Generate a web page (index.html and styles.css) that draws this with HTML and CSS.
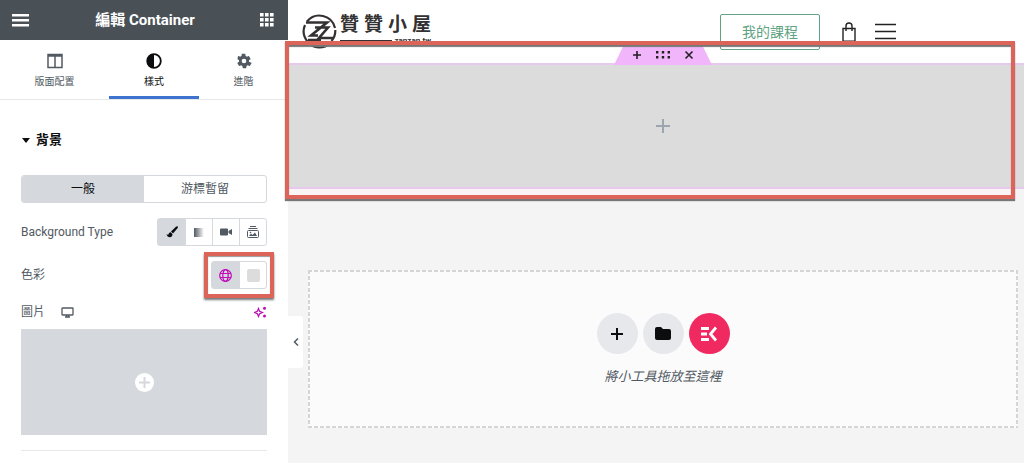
FILE: index.html
```html
<!DOCTYPE html>
<html lang="zh-Hant">
<head>
  <meta charset="UTF-8" />
  <meta name="viewport" content="width=device-width, initial-scale=1.0" />
  <title>編輯 Container</title>
  <link rel="stylesheet" href="styles.css">
</head>
<body>
  <aside class="panel">
    <header class="panel-header">
      <button type="button" class="icon-button" aria-label="Menu">
        <svg width="18" height="14" viewBox="0 0 18 14" fill="#fff"><path d="M0 1h17v2.400H0zM0 6h17v2.400H0zM0 11h17v2.400H0z"/></svg>
      </button>
      <h1>編輯 Container</h1>
      <button type="button" class="icon-button" aria-label="Widgets">
        <svg width="14" height="14" viewBox="0 0 14 14" fill="#fff"><path d="M0 0h3.600v3.600H0zM5 0h3.600v3.600H5zM10 0h3.600v3.600H10zM0 5h3.600v3.600H0zM5 5h3.600v3.600H5zM10 5h3.600v3.600H10zM0 10h3.600v3.600H0zM5 10h3.600v3.600H5zM10 10h3.600v3.600H10z"/></svg>
      </button>
    </header>

    <nav class="tabs">
      <button type="button" class="tab">
        <svg width="16" height="16" viewBox="0 0 16 16" fill="none" stroke="#515962" stroke-width="1.5"><path d="M1 1.5h14v13H1zM8 3v12"/><path d="M1 2.500h14" stroke-width="2.5"/></svg>
        版面配置
      </button>
      <button type="button" class="tab active">
        <svg width="16" height="16" viewBox="0 0 16 16"><circle cx="8" cy="8" r="6.8" fill="none" stroke="#0c0d0e" stroke-width="1.8"/><path d="M8 1a7 7 0 0 0 0 14z" fill="#0c0d0e"/></svg>
        樣式
      </button>
      <button type="button" class="tab">
        <svg width="16" height="16" viewBox="0 0 24 24" fill="#515962"><path d="M19.4 13c.1-.3.1-.7.1-1s0-.7-.1-1l2.300-1.800c.2-.2.3-.5.1-.7l-2.200-3.800c-.1-.2-.4-.3-.7-.2l-2.700 1.100c-.6-.4-1.200-.8-1.800-1l-.4-2.900c0-.3-.3-.5-.5-.5h-4.400c-.3 0-.5.2-.5.5l-.4 2.900c-.7.300-1.300.6-1.800 1l-2.700-1.100c-.3-.1-.5 0-.7.2L2.300 8.500c-.1.200-.1.500.1.700L4.600 11c0 .3-.1.700-.1 1s0 .7.100 1l-2.300 1.800c-.2.200-.2.500-.1.700l2.200 3.800c.1.200.4.300.7.200l2.700-1.100c.6.400 1.200.8 1.800 1l.4 2.900c0 .3.300.5.500.5h4.400c.3 0 .5-.2.500-.5l.4-2.900c.7-.3 1.300-.6 1.800-1l2.700 1.100c.3.100.5 0 .7-.2l2.200-3.800c.1-.2.1-.5-.1-.7zM12 15.500a3.500 3.500 0 1 1 0-7 3.500 3.500 0 0 1 0 7z"/></svg>
        進階
      </button>
    </nav>

    <section class="controls">
      <h2><span class="caret"></span>背景</h2>

      <div class="state-switch">
        <button type="button" class="active">一般</button>
        <button type="button">游標暫留</button>
      </div>

      <fieldset class="row">
        <legend class="hidden">Background Type</legend>
        <span class="label">Background Type</span>
        <div class="choices">
          <label class="choice">
            <input type="radio" name="bg-type" class="hidden" aria-label="Classic" checked>
            <svg width="12" height="12" viewBox="0 0 12 12" fill="#0c0d0e"><path d="M11.700.6c-.5-.5-1.300-.3-1.800.2L5 5.600l2 2 4.500-5.400c.4-.5.6-1.200.2-1.600zM4.600 6.300C3.200 6.300 2.900 7.500 2.600 8.200 2.200 8.900 1.300 8.600.5 8.300c.5 1.800 1.700 2.900 3.300 2.900 1.800 0 2.800-1.400 2.600-3.200z"/></svg>
          </label>
          <label class="choice">
            <input type="radio" name="bg-type" class="hidden" aria-label="Gradient">
            <span class="gradient-icon"></span>
          </label>
          <label class="choice">
            <input type="radio" name="bg-type" class="hidden" aria-label="Video">
            <svg width="12" height="12" viewBox="0 0 12 12" fill="#515962"><path d="M1 2.500h6a1 1 0 0 1 1 1v5a1 1 0 0 1-1 1H1a1 1 0 0 1-1-1v-5a1 1 0 0 1 1-1zM8.500 5 12 3v6L8.500 7z"/></svg>
          </label>
          <label class="choice">
            <input type="radio" name="bg-type" class="hidden" aria-label="Slideshow">
            <svg width="12" height="12" viewBox="0 0 12 12" fill="none" stroke="#515962"><path d="M3 .5h6M1.500 2.500h9M1.500 4.500h9a1 1 0 0 1 1 1v5a1 1 0 0 1-1 1h-9a1 1 0 0 1-1-1v-5a1 1 0 0 1 1-1z"/><path d="m2 10 2-2.500 1.500 1.500L8 6.500l2 3.500z" fill="#515962" stroke="none"/><circle cx="3.500" cy="6.500" r=".8" fill="#515962" stroke="none"/></svg>
          </label>
        </div>
      </fieldset>

      <div class="row">
        <span class="label">色彩</span>
        <div class="choices marked">
          <button type="button" class="choice active" aria-label="Global color">
            <svg width="13" height="13" viewBox="0 0 13 13" fill="none" stroke="#c00bb9" stroke-width="1.200"><circle cx="6.500" cy="6.500" r="5.800"/><ellipse cx="6.500" cy="6.500" rx="2.700" ry="5.800"/><path d="M1 4.500h11M1 8.500h11"/></svg>
          </button>
          <button type="button" class="choice" aria-label="Pick color"><span class="swatch"></span></button>
          <span class="callout small"></span>
        </div>
      </div>

      <div class="row image-row">
        <span class="label">圖片</span>
        <button type="button" class="icon-button device" aria-label="Desktop">
          <svg width="13" height="11" viewBox="0 0 13 11" fill="none" stroke="#515962" stroke-width="1.300"><path d="M1.500 1h10a.5.500 0 0 1 .5.500v6a.5.500 0 0 1-.5.500h-10a.5.500 0 0 1-.5-.5v-6A.5.500 0 0 1 1.500 1zM4 10h5M5.500 8v2M7.500 8v2"/></svg>
        </button>
        <button type="button" class="icon-button" aria-label="AI">
          <svg width="13" height="12" viewBox="0 0 13 12" fill="#c00bb9"><path d="M4.500 2.500 5.600 5.300 8.500 6.500 5.600 7.700 4.500 10.500 3.400 7.700.5 6.500 3.400 5.300z" fill="none" stroke="#c00bb9" stroke-width="1.200"/><circle cx="10.500" cy="2.300" r="1.500"/><circle cx="10.500" cy="10" r="1.500"/></svg>
        </button>
      </div>

      <button type="button" class="image-picker" aria-label="Choose image">
        <svg width="19" height="19" viewBox="0 0 19 19"><circle cx="9.500" cy="9.500" r="9.500" fill="#fff"/><path d="M9.500 4v11M4 9.500h11" stroke="#d5d8dc" stroke-width="2"/></svg>
      </button>
      <hr>
    </section>
  </aside>

  <main class="canvas">
    <header class="site-header">
      <a href="#" class="logo">
        <svg width="35" height="35" viewBox="0 0 35 35" fill="none" stroke="#333132" stroke-width="2.200"><path d="M5 7.500A16 16 0 0 1 33 14M33.300 16A16 16 0 0 1 29.500 27M5.500 27.500A16 16 0 0 1 3 11M7 29.500a16 16 0 0 0 21 0"/><path d="M4 8.500h21L9 21.500h7M13 13.500h13L17 24h14M6 26h13" stroke-width="2.600"/></svg>
        <span class="logo-text">
          <span class="logo-name"><span>贊</span><span>贊</span><span>小</span><span>屋</span></span>
          <span class="logo-domain">zanzan.tw</span>
        </span>
      </a>
      <a href="#" class="course-link">我的課程</a>
      <button type="button" class="icon-button bag" aria-label="Cart">
        <svg width="14" height="20" viewBox="0 0 14 20" fill="none" stroke="#222" stroke-width="1.400"><path d="M1 6.500h12v12a.7.700 0 0 1-.7.700H1.700a.7.700 0 0 1-.7-.7zM4 9V4a3 3 0 0 1 6 0v5"/></svg>
      </button>
      <button type="button" class="icon-button" aria-label="Site menu">
        <svg width="21" height="17" viewBox="0 0 21 17" stroke="#222" stroke-width="1.600"><path d="M0 1.500h21M0 8.500h21M0 15.500h21"/></svg>
      </button>
    </header>

    <section class="container">
      <div class="handle">
        <button type="button" class="icon-button" aria-label="Add">
          <svg width="10" height="10" viewBox="0 0 10 10" stroke="#222" stroke-width="1.600"><path d="M5 1v8M1 5h8"/></svg>
        </button>
        <button type="button" class="icon-button" aria-label="Edit">
          <svg width="14" height="8" viewBox="0 0 14 8" fill="#222"><path d="M0 0h2.400v2.400H0zM5.800 0h2.400v2.400H5.800zM11.600 0H14v2.400h-2.400zM0 5h2.400v2.400H0zM5.800 5h2.400v2.400H5.800zM11.600 5H14v2.400h-2.400z"/></svg>
        </button>
        <button type="button" class="icon-button" aria-label="Delete">
          <svg width="10" height="10" viewBox="0 0 10 10" stroke="#222" stroke-width="1.600"><path d="m1.500 1.500 7 7M8.500 1.500l-7 7"/></svg>
        </button>
      </div>
      <button type="button" class="icon-button" aria-label="Add widget">
        <svg width="14" height="14" viewBox="0 0 14 14" stroke="#9da5ae" stroke-width="2"><path d="M7 0v14M0 7h14"/></svg>
      </button>
      <span class="callout"></span>
    </section>

    <section class="drop-area">
      <div class="drop-actions">
        <button type="button" class="round" aria-label="Add container">
          <svg width="12" height="12" viewBox="0 0 12 12" stroke="#0c0d0e" stroke-width="2"><path d="M6 0v12M0 6h12"/></svg>
        </button>
        <button type="button" class="round" aria-label="Templates">
          <svg width="16" height="14" viewBox="0 0 16 14" fill="#0c0d0e"><path d="M2 0h4l2 2h6a2 2 0 0 1 2 2v7a2 2 0 0 1-2 2H2a2 2 0 0 1-2-2V2a2 2 0 0 1 2-2z"/></svg>
        </button>
        <button type="button" class="round kit" aria-label="ElementsKit">
          <svg width="18" height="16" viewBox="0 0 18 16" fill="none" stroke="#fff" stroke-width="2.800"><path d="M1 2.500h8M1 8h6M1 13.500h8M16 1.500 10.500 8l5.500 6.500"/></svg>
        </button>
      </div>
      <p>將小工具拖放至這裡</p>
    </section>

    <button type="button" class="collapse" aria-label="Hide panel">
      <svg width="6" height="8" viewBox="0 0 6 8" fill="none" stroke="#515962" stroke-width="1.500"><path d="M5 .5 1.500 4 5 7.500"/></svg>
    </button>
  </main>
</body>
</html>
```
FILE: styles.css
```css
* { box-sizing: border-box; }
body { margin: 0; min-height: 100vh; display: flex; font-family: Roboto, "Noto Sans CJK TC", sans-serif; font-size: 12px; line-height: 16px; color: #515962; background: #f4f4f4; }
button { font: inherit; color: inherit; margin: 0; padding: 0; border: 0; background: none; cursor: pointer; }
svg { display: block; flex: none; }
a { text-decoration: none; }
.hidden { position: absolute; width: 1px; height: 1px; margin: 0; padding: 0; overflow: hidden; opacity: 0; }
.icon-button { display: flex; align-items: center; justify-content: center; }

/* Panel */
.panel { flex: 0 0 288px; background: #fff; }
.panel-header { display: flex; align-items: center; justify-content: space-between; padding: 0 14px 0 12px; min-height: 40px; background: #495157; }
.panel-header h1 { margin: 0; font-size: 15px; line-height: 20px; font-weight: 700; color: #fff; }
.tabs { display: grid; grid-template-columns: 109fr 90fr 89fr; border-bottom: 1px solid #e6e8ea; }
.tab { display: flex; flex-direction: column; align-items: center; gap: 5px; padding: 13px 0 6px; font-size: 10px; border-bottom: 3px solid transparent; }
.tab.active { color: #0c0d0e; border-bottom-color: #3f73d0; }

.controls { padding: 32px 21px 11px; }
.controls h2 { display: flex; align-items: center; gap: 6px; margin: 0 0 27px; font-size: 13px; line-height: 16px; font-weight: 700; color: #0c0d0e; }
.caret { border: 4px solid transparent; border-top: 5px solid #0c0d0e; border-bottom: 0; margin-left: 1px; }
.state-switch { display: grid; grid-template-columns: 1fr 1fr; border: 1px solid #d5d8dc; border-radius: 3px; overflow: hidden; margin-bottom: 15px; }
.state-switch button { line-height: 26px; }
.state-switch .active { background: #d5d8dc; color: #0c0d0e; }

.row { display: flex; align-items: center; justify-content: space-between; border: 0; margin: 0 0 15px; padding: 0; }
.choices { display: flex; border: 1px solid #d5d8dc; border-radius: 3px; }
.choice { display: flex; align-items: center; justify-content: center; width: 27px; height: 26px; cursor: pointer; }
.choice:nth-of-type(n+2) { border-left: 1px solid #d5d8dc; }
.choice:has(:checked), .choice.active { background: #d5d8dc; }
.gradient-icon { width: 10px; height: 9px; background: linear-gradient(90deg, #515962, #fff); }
.swatch { width: 13px; height: 13px; border-radius: 2px; background: #dcdcdc; }
.marked { position: relative; }
.image-row { justify-content: flex-start; margin-bottom: 9px; }
.image-row .device { margin: 0 auto 0 16px; }
.image-picker { display: flex; align-items: center; justify-content: center; width: 100%; height: 106px; background: #d5d8dc; }
.controls hr { margin: 15px 0 0; border: 0; border-top: 1px solid #e6e8ea; }

/* Highlight frames */
.callout { position: absolute; inset: -24px 9px -12px -3px; border: 4px solid #dd6459; box-shadow: 0 2px 1px #777, inset 0 2px 1px #777, inset 0 -6px #fbf4f5; pointer-events: none; }
.callout.small { inset: -10px -8px; box-shadow: 0 2px 2px #777, inset 0 1px 1px #999; }

/* Page preview */
.canvas { position: relative; flex: 1; min-width: 0; }
.site-header { display: flex; align-items: center; min-height: 63px; padding: 0 128px 0 14px; background: #fff; }
.logo { display: flex; align-items: center; gap: 3px; margin-right: auto; color: #333132; }
.logo-name { display: flex; gap: 5px; font-size: 19px; line-height: 22px; font-weight: 700; }
.logo-text { display: flex; flex-direction: column; padding-bottom: 4px; }
.logo-domain { display: flex; align-items: center; gap: 2px; font-size: 8px; line-height: 9px; font-weight: 700; }
.logo-domain::before { content: ""; flex: 1; height: 2px; background: #333132; }
.course-link { padding: 0 21px; border: 1px solid #60a281; border-radius: 2px; font-size: 14px; line-height: 34px; color: #60a281; }
.bag { margin: 0 19px 0 22px; }

.container { position: relative; display: flex; align-items: center; justify-content: center; min-height: 126px; padding: 53px 0 53px 14px; background: #dcdcdc; border: solid #e8c9ee; border-width: 2px 0; }
.handle { position: absolute; bottom: 100%; left: 50%; display: flex; align-items: center; justify-content: center; gap: 14px; width: 98px; height: 20px; margin-left: -42px; background: #f0b5fb; clip-path: polygon(10% 0, 90% 0, 100% 100%, 0 100%); }

.drop-area {
  --dash: #d5d5d5 0 4px, transparent 4px 6px;
  display: flex; flex-direction: column; align-items: center; gap: 13px;
  margin: 81px 6px 36px 20px; padding: 43px 0 41px;
  background:
    repeating-linear-gradient(90deg, var(--dash)) top / 100% 2px no-repeat,
    repeating-linear-gradient(90deg, var(--dash)) bottom / 100% 2px no-repeat,
    repeating-linear-gradient(var(--dash)) left / 2px 100% no-repeat,
    repeating-linear-gradient(var(--dash)) right / 2px 100% no-repeat,
    #fbfbfb;
}
.drop-actions { display: flex; gap: 5px; }
.round { display: flex; align-items: center; justify-content: center; width: 41px; height: 41px; border-radius: 50%; background: #e6e8ec; }
.round.kit { background: #f02a60; }
.drop-area p { margin: 0; font-size: 13px; line-height: 20px; font-style: italic; }
.collapse { position: absolute; left: 0; top: 316px; display: flex; align-items: center; justify-content: center; width: 15px; height: 52px; border-radius: 0 3px 3px 0; background: #fff; }
```
